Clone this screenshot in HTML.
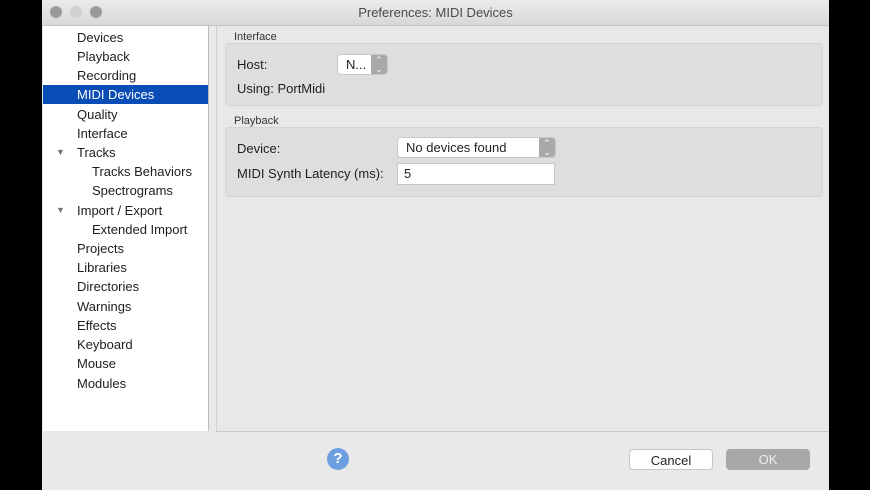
<!DOCTYPE html>
<html><head><style>
body{margin:0;width:870px;height:490px;background:#000;font-family:"Liberation Sans",sans-serif;position:relative;overflow:hidden}
.win{position:absolute;left:42px;top:0;width:787px;height:490px;background:#e9e9e9}
.title{position:absolute;left:0;top:0;width:787px;height:25px;background:linear-gradient(#ebebeb,#d8d8d8);border-bottom:1px solid #c4c4c4;text-align:center;font-size:13px;line-height:25px;color:#4a4a4a}
.dot{position:absolute;top:6px;width:12px;height:12px;border-radius:50%}
.side{position:absolute;left:1px;top:26px;width:165px;height:405px;background:#fff;border-right:1px solid #bdbdbd}
.side div{position:absolute;font-size:13px;color:#1e1e1e;height:19px;line-height:19px}
.sel{background:#0a4db6;color:#fff!important;left:0!important;width:165px;padding-left:34px;box-sizing:border-box}
.content{position:absolute;left:174px;top:26px;width:612px;height:405px;background:#e8e8e8;border-left:1px solid #d0d0d0;border-bottom:1px solid #c8c8c8}
.lbl{position:absolute;font-size:11px;color:#333}
.box{position:absolute;left:8px;width:596px;background:#dedede;border:1px solid #d4d4d4;border-radius:4px}
.t{position:absolute;font-size:13px;color:#1e1e1e}
.pop{position:absolute;background:#fff;border:1px solid #c8c8c8;border-radius:4px;font-size:13px;color:#222;box-sizing:border-box;line-height:19px;padding-left:8px}
.arr{position:absolute;right:0;top:0;width:16px;height:100%;background:#a9a9a9;border-radius:0 3px 3px 0;color:#fff;font-size:9px;text-align:center;line-height:9px;padding-top:1px;box-sizing:border-box}
.btn{position:absolute;top:449px;height:21px;border-radius:4px;font-size:13px;text-align:center;line-height:21px;box-sizing:border-box}
</style></head><body>
<div class="win">
<div class="title">Preferences: MIDI Devices
<span class="dot" style="left:8px;background:#9a9a9a"></span><span class="dot" style="left:28px;background:#d0d0d0"></span><span class="dot" style="left:48px;background:#9a9a9a"></span></div>
<div class="side">
<div style="left:34px;top:2px">Devices</div>
<div style="left:34px;top:21px">Playback</div>
<div style="left:34px;top:40px">Recording</div>
<div class="sel" style="top:59px">MIDI Devices</div>
<div style="left:34px;top:79px">Quality</div>
<div style="left:34px;top:98px">Interface</div>
<div style="left:13px;top:117px;font-size:9px;color:#777">▼</div>
<div style="left:34px;top:117px">Tracks</div>
<div style="left:49px;top:136px">Tracks Behaviors</div>
<div style="left:49px;top:155px">Spectrograms</div>
<div style="left:13px;top:175px;font-size:9px;color:#777">▼</div>
<div style="left:34px;top:175px">Import / Export</div>
<div style="left:49px;top:194px">Extended Import</div>
<div style="left:34px;top:213px">Projects</div>
<div style="left:34px;top:232px">Libraries</div>
<div style="left:34px;top:251px">Directories</div>
<div style="left:34px;top:271px">Warnings</div>
<div style="left:34px;top:290px">Effects</div>
<div style="left:34px;top:309px">Keyboard</div>
<div style="left:34px;top:328px">Mouse</div>
<div style="left:34px;top:348px">Modules</div>
</div>
<div class="content">
<div class="lbl" style="left:17px;top:5px">Interface</div>
<div class="box" style="top:17px;height:61px"></div>
<div class="t" style="left:20px;top:31px">Host:</div>
<div class="pop" style="left:120px;top:28px;width:51px;height:21px">N...<span class="arr">⌃<br>⌄</span></div>
<div class="t" style="left:20px;top:55px">Using: PortMidi</div>
<div class="lbl" style="left:17px;top:89px">Playback</div>
<div class="box" style="top:101px;height:68px"></div>
<div class="t" style="left:20px;top:115px">Device:</div>
<div class="pop" style="left:180px;top:111px;width:159px;height:21px">No devices found<span class="arr">⌃<br>⌄</span></div>
<div class="t" style="left:20px;top:140px">MIDI Synth Latency (ms):</div>
<div class="pop" style="left:180px;top:137px;width:158px;height:22px;border-radius:0;padding-left:6px">5</div>
</div>
<div style="position:absolute;left:285px;top:448px;width:22px;height:22px;border-radius:50%;background:#6d9fe0;color:#fff;font-size:15px;font-weight:bold;text-align:center;line-height:22px">?</div>
<div class="btn" style="left:587px;width:84px;background:#fff;border:1px solid #c6c6c6;color:#222">Cancel</div>
<div class="btn" style="left:684px;width:84px;background:#a8a8a8;color:#eee">OK</div>
</div>
</body></html>
